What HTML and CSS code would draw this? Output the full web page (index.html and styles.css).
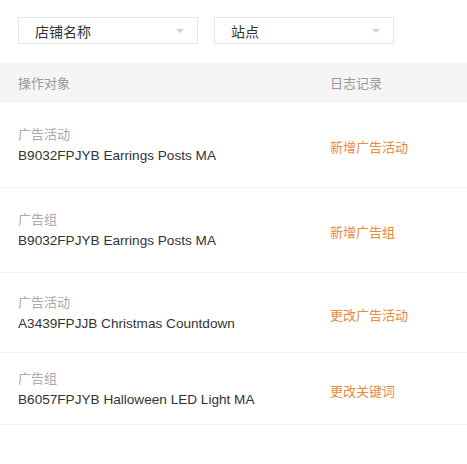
FILE: index.html
```html
<!DOCTYPE html>
<html lang="zh-CN">

<head>
    <meta charset="UTF-8">
    <meta name="viewport" content="width=device-width, initial-scale=1.0">
    <title>日志记录</title>

    <link rel="stylesheet" href="styles.css">
</head>

<body>

    <!-- FILTERS -->
    <div class="filters">
        <div class="filters__select">
            <span class="filters__select-text">店铺名称</span>
            <span class="filters__select-arrow"></span>
        </div>
        <div class="filters__select">
            <span class="filters__select-text">站点</span>
            <span class="filters__select-arrow"></span>
        </div>
    </div>

    <!-- LOG TABLE -->
    <div class="log">
        <div class="log__head">
            <div class="log__col-main">操作对象</div>
            <div class="log__col-action">日志记录</div>
        </div>

        <div class="log__row">
            <div class="log__col-main">
                <div class="log__type">广告活动</div>
                <div class="log__name">B9032FPJYB Earrings Posts MA</div>
            </div>
            <div class="log__col-action log__action">新增广告活动</div>
        </div>

        <div class="log__row">
            <div class="log__col-main">
                <div class="log__type">广告组</div>
                <div class="log__name">B9032FPJYB Earrings Posts MA</div>
            </div>
            <div class="log__col-action log__action">新增广告组</div>
        </div>

        <div class="log__row">
            <div class="log__col-main">
                <div class="log__type">广告活动</div>
                <div class="log__name">A3439FPJJB Christmas Countdown</div>
            </div>
            <div class="log__col-action log__action">更改广告活动</div>
        </div>

        <div class="log__row">
            <div class="log__col-main">
                <div class="log__type">广告组</div>
                <div class="log__name">B6057FPJYB Halloween LED Light MA</div>
            </div>
            <div class="log__col-action log__action">更改关键词</div>
        </div>
    </div>
    <!-- END LOG TABLE -->

</body>
</html>
```

FILE: styles.css
```css
body {
    margin: 0;
    background-color: #fff;
    font-family: "Liberation Sans", "Noto Sans CJK SC", sans-serif;
    color: #333;
}

/* Filters */

.filters {
    display: flex;
    gap: 16px;
    padding: 17px 18px 0;
}

.filters__select {
    width: 180px;
    height: 27px;
    box-sizing: border-box;
    border: 1px solid #e6e6e6;
    display: flex;
    align-items: center;
    justify-content: space-between;
    padding: 0 13px 0 16px;
}

.filters__select-text {
    font-size: 14px;
    color: #333;
}

.filters__select-arrow {
    width: 0;
    height: 0;
    border-left: 4px solid transparent;
    border-right: 4px solid transparent;
    border-top: 4px solid #d0d0d0;
}

/* Log table */

.log {
    margin-top: 19px;
}

.log__head {
    display: flex;
    align-items: center;
    height: 39px;
    background-color: #f5f5f5;
    font-size: 13px;
    color: #999;
}

.log__col-main {
    flex: 1;
    padding-left: 18px;
}

.log__col-action {
    width: 137px;
}

.log__row {
    display: flex;
    align-items: center;
    height: 84px;
    border-bottom: 1px solid #f2f2f2;
}

.log__row:nth-child(2) {
    height: 85px;
}

.log__row:nth-child(4) {
    height: 79px;
}

.log__row:nth-child(5) {
    height: 71px;
}

.log__type {
    font-size: 13px;
    line-height: 21px;
    color: #aaa;
}

.log__name {
    font-size: 13.6px;
    line-height: 21px;
    color: #333;
}

.log__action {
    font-size: 13px;
    color: #e8893b;
    padding: 3px 0 0 3px;
}

/* END Log table */
```
